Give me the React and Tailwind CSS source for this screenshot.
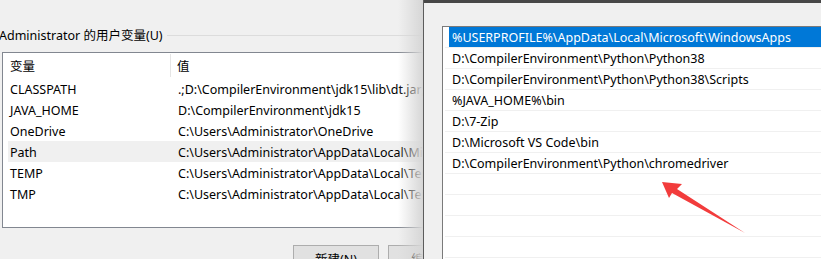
import React from 'react';

const userVars = [
  { name: 'CLASSPATH', value: '.;D:\\CompilerEnvironment\\jdk15\\lib\\dt.jar;D:\\CompilerEnvironment\\jdk15\\lib\\tools.jar' },
  { name: 'JAVA_HOME', value: 'D:\\CompilerEnvironment\\jdk15' },
  { name: 'OneDrive', value: 'C:\\Users\\Administrator\\OneDrive' },
  { name: 'Path', value: 'C:\\Users\\Administrator\\AppData\\Local\\Microsoft\\WindowsApps;', active: true },
  { name: 'TEMP', value: 'C:\\Users\\Administrator\\AppData\\Local\\Temp' },
  { name: 'TMP', value: 'C:\\Users\\Administrator\\AppData\\Local\\Temp' },
];

const pathItems = [
  '%USERPROFILE%\\AppData\\Local\\Microsoft\\WindowsApps',
  'D:\\CompilerEnvironment\\Python\\Python38',
  'D:\\CompilerEnvironment\\Python\\Python38\\Scripts',
  '%JAVA_HOME%\\bin',
  'D:\\7-Zip',
  'D:\\Microsoft VS Code\\bin',
  'D:\\CompilerEnvironment\\Python\\chromedriver',
  '',
  '',
  '',
  '',
];

const App = () => {
  return (
    <div className="relative w-[821px] h-[259px] overflow-hidden bg-[#f0f0f0] text-[12.5px] text-black font-['Noto_Sans','Noto_Sans_CJK_SC',sans-serif]">
      {/* 环境变量窗口 */}
      <div className="w-[424px] h-[259px] overflow-hidden flex flex-col">
        <div className="flex items-center h-[14px] mt-[28px] -ml-[1px]">
          <span className="whitespace-nowrap leading-none pt-[2px]">Administrator 的用户变量(U)</span>
          <div className="flex-1 h-px bg-[#dcdcdc] ml-[4px]"></div>
        </div>
        <div className="ml-[2px] mt-[10px] w-[600px] h-[176px] shrink-0 border border-[#828790] bg-white flex flex-col overflow-hidden">
          <div className="flex h-[25px] items-center">
            <div className="w-[168px] shrink-0 h-[23px] pl-[7px] pt-[4px] flex items-center border-r border-[#e5e5e5]">变量</div>
            <div className="pl-[6px] pt-[4px]">值</div>
          </div>
          {userVars.map((v) => (
            <div
              key={v.name}
              className={`flex h-[21px] items-center ml-[5px] pt-[4px] ${v.active ? 'bg-[#f0f0f0]' : ''}`}
            >
              <div className="w-[170px] shrink-0 pl-[2px] whitespace-nowrap">{v.name}</div>
              <div className="whitespace-nowrap">{v.value}</div>
            </div>
          ))}
        </div>
        <div className="flex mt-[17px] ml-[293px] gap-[9px]">
          <div className="w-[86px] h-[24px] shrink-0 border border-[#adadad] bg-[#e1e1e1] flex justify-center pt-[5px] whitespace-nowrap">新建(N)</div>
          <div className="w-[86px] h-[24px] shrink-0 border border-[#adadad] bg-[#e1e1e1] flex justify-center pt-[5px] whitespace-nowrap">编辑(E)</div>
        </div>
      </div>

      {/* 窗口阴影 */}
      <div className="absolute top-0 left-[398px] w-[25px] h-[259px] bg-gradient-to-r from-transparent to-[#d6d6d6]"></div>

      {/* 编辑环境变量窗口 */}
      <div className="absolute top-0 left-[423px] w-[400px] h-[259px] bg-[#f0f0f0] border-l border-[#5c5c5c] flex flex-col">
        <div className="h-[3px] bg-[#474747]"></div>
        <div className="ml-[18px] mt-[23px] w-[420px] h-[260px] border-t border-l border-[#7a7a7a] bg-white pl-[2px]">
          {pathItems.map((p, i) => (
            <div key={i} className="h-[21px] border-b border-[#f0f0f0] flex">
              <div
                className={`flex-1 flex items-center whitespace-nowrap ml-[4px] pl-[3px] pt-[4px] ${i === 0 ? 'bg-[#0078d7] text-white' : ''}`}
              >
                {p}
              </div>
            </div>
          ))}
        </div>
      </div>

      {/* 红色箭头 */}
      <svg className="absolute left-0 top-0 pointer-events-none" width="821" height="259">
        <polygon points="662,182 682,184 677,189 745,233 672,193 669,198" fill="#f23c3c" />
      </svg>
    </div>
  );
};

export default App;
